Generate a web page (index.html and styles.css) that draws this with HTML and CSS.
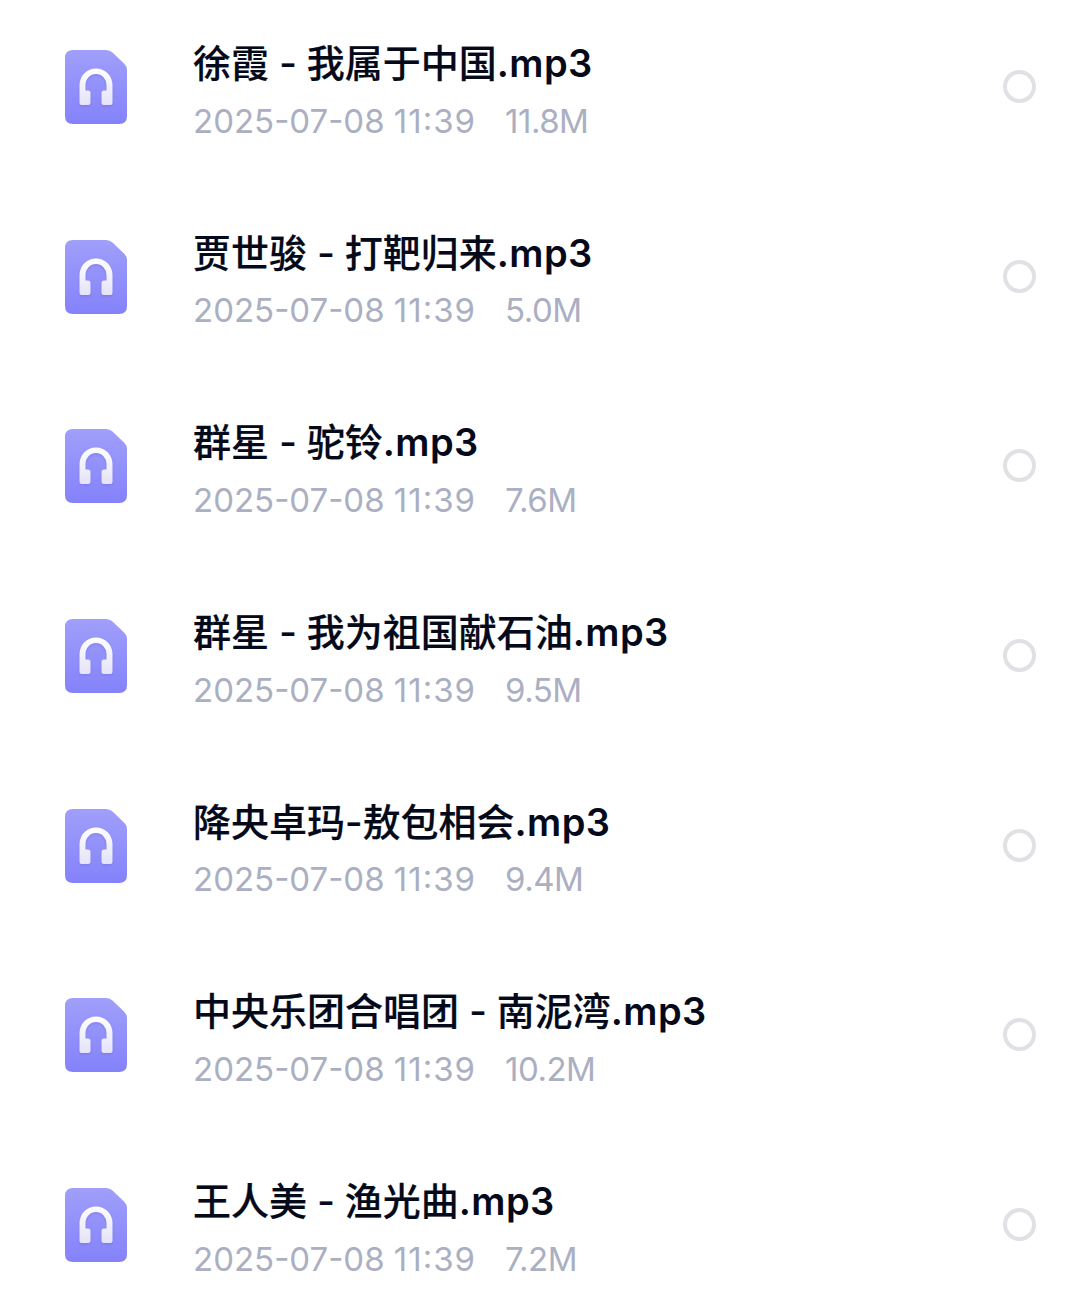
FILE: index.html
```
<!DOCTYPE html>
<html lang="zh-CN">
<head>
  <meta charset="UTF-8">
  <meta name="viewport" content="width=device-width, initial-scale=1.0">
  <title>音频文件</title>
  <link rel="stylesheet" href="styles.css">
</head>
<body>
  <ul class="lista" id="lista"></ul>

  <template id="fila">
    <li class="archivo">
      <svg class="icono" viewBox="0 0 62 74">
        <path d="M8 0H41Q45 0 47.500 2.500L59.500 14Q62 16.500 62 20V66Q62 74 54 74H8Q0 74 0 66V8Q0 0 8 0Z" fill="url(#morado)"/>
        <path class="sombra" d="M14.500 35A16.500 16.500 0 0 1 47.500 35V53Q47.500 55 45.500 55H39Q36.500 55 36.500 52.500V43Q36.500 40.500 39 40.500H41.500V35A10.500 11 0 0 0 20.500 35V40.500H23Q25.500 40.500 25.500 43V52.500Q25.500 55 23 55H16.500Q14.500 55 14.500 53Z"/>
        <path d="M14.500 35A16.500 16.500 0 0 1 47.500 35V53Q47.500 55 45.500 55H39Q36.500 55 36.500 52.500V43Q36.500 40.500 39 40.500H41.500V35A10.500 11 0 0 0 20.500 35V40.500H23Q25.500 40.500 25.500 43V52.500Q25.500 55 23 55H16.500Q14.500 55 14.500 53Z" fill="url(#blanco)"/>
      </svg>
      <div class="datos">
        <div class="nombre"><span class="titulo"></span><span class="ext">.mp3</span></div>
        <div class="detalle"><span class="fecha">2025-07-08 <span class="hora">11:39</span></span><span class="peso"></span></div>
      </div>
      <span class="marca"></span>
    </li>
  </template>

  <svg class="defs">
    <linearGradient id="morado" x1="0" y1="0" x2="0" y2="1">
      <stop offset="0" stop-color="#a09ffa"/><stop offset="1" stop-color="#8482fa"/>
    </linearGradient>
    <linearGradient id="blanco" gradientUnits="userSpaceOnUse" x1="0" y1="18" x2="0" y2="56">
      <stop offset="0" stop-color="#fff"/><stop offset="1" stop-color="#e3e2f8"/>
    </linearGradient>
  </svg>

  <script src="script.js"></script>
</body>
</html>
```
FILE: styles.css
```
body { margin: 0; background: #fff; font-family: Inter, "Noto Sans CJK SC", sans-serif; overflow: hidden }
.defs { position: absolute; width: 0; height: 0 }
.lista { list-style: none; margin: 0; padding: 0 }
.archivo {
  display: flex; align-items: flex-start;
  height: 189.700px; padding: 0 44px 0 65px; box-sizing: border-box;
}
.icono { width: 62px; height: 74px; margin-top: 50px; flex: none }
.sombra { fill: #6f6ae0; opacity: .45; filter: blur(1.200px); transform: translateY(1.500px) }
.datos { margin: 36px 0 0 66px; flex: 1; white-space: nowrap }

/* titulo */
.nombre { font-size: 38px; line-height: 54px; color: #050a1a }
.titulo { font-weight: 500; -webkit-text-stroke: .2px #050a1a }
.ext { font-weight: 600; letter-spacing: .4px }

/* fecha y peso */
.detalle { font-size: 33px; line-height: 40px; margin-top: 10.500px; color: #abafc2; display: flex; gap: 29px }
.hora { letter-spacing: 1px; font-feature-settings: "case" }
.peso { letter-spacing: -.5px }

.marca {
  width: 33px; height: 33px; margin-top: 70px; flex: none;
  border: 4px solid #e0e1e5; border-radius: 50%; box-sizing: border-box;
}
```
FILE: script.js
```
const archivos = [
  ['徐霞 - 我属于中国', '11.8M'],
  ['贾世骏 - 打靶归来', '5.0M'],
  ['群星 - 驼铃', '7.6M'],
  ['群星 - 我为祖国献石油', '9.5M'],
  ['降央卓玛-敖包相会', '9.4M'],
  ['中央乐团合唱团 - 南泥湾', '10.2M'],
  ['王人美 - 渔光曲', '7.2M']
];

const lista = document.getElementById('lista');
const fila = document.getElementById('fila');

archivos.forEach(([nombre, peso]) => {
  const li = fila.content.cloneNode(true);
  li.querySelector('.titulo').textContent = nombre;
  li.querySelector('.peso').textContent = peso;
  lista.appendChild(li);
});
```
